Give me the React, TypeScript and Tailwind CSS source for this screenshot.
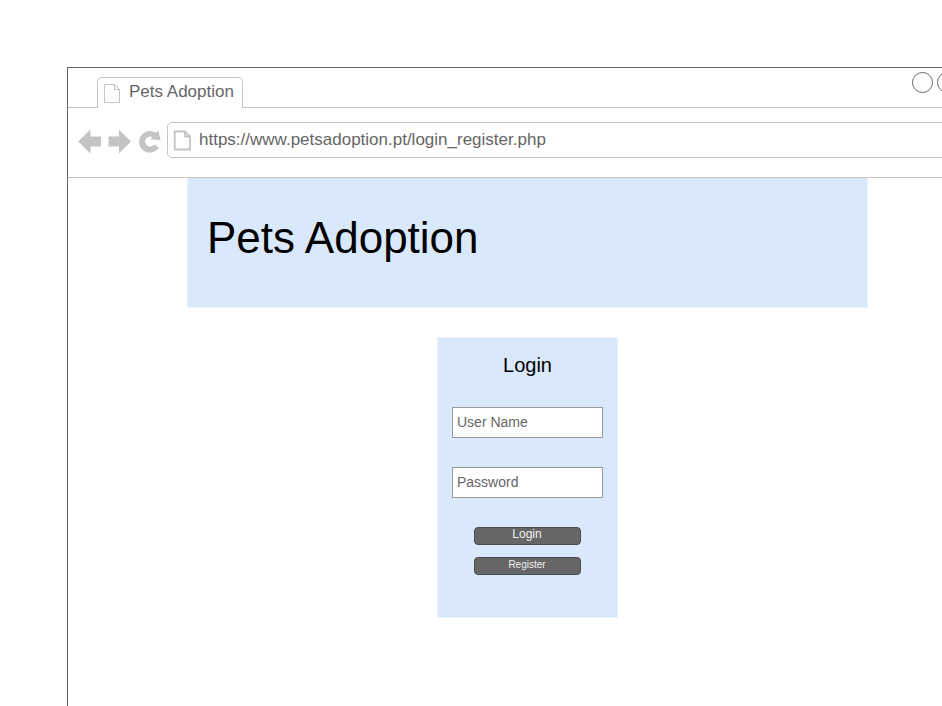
import React from "react";

function PageIcon({ className, strokeWidth, d, fold }: { className: string; strokeWidth: number; d: string; fold: string }) {
  return (
    <svg className={className} viewBox="0 0 20 22" width="20" height="22" fill="none" stroke="#c4c4c4" strokeWidth={strokeWidth}>
      <path d={d} />
      <path d={fold} />
    </svg>
  );
}

function TabStrip() {
  return (
    <div className="flex h-10 w-[900px] shrink-0">
      <div className="w-[29px] border-b border-[#c4c4c4]" />
      <div className="flex h-[31px] w-[146px] self-end rounded-t-[5px] border border-b-0 border-[#c4c4c4]">
        <PageIcon className="ml-1.5 mt-[5px] shrink-0" strokeWidth={1} d="M.5 1.5H10.5L15.5 6.5V19.5H.5Z" fold="M10.5 1.5V6.5H15.5" />
        <span className="ml-[5px] mt-[4px] whitespace-nowrap text-[17px] leading-5 text-[#666]">Pets Adoption</span>
      </div>
      <div className="flex grow gap-[4px] border-b border-[#c4c4c4] pl-[669px] pt-1">
        <div className="size-[21px] shrink-0 rounded-full border border-[#666]" />
        <div className="size-[21px] shrink-0 rounded-full border border-[#666]" />
      </div>
    </div>
  );
}

function AddressBar() {
  return (
    <div className="flex h-[70px] w-[900px] shrink-0 border-b border-[#c4c4c4] pt-3.5">
      <svg className="mt-1.5 shrink-0" width="99" height="28" viewBox="0 0 99 28" fill="#c4c4c4">
        <path d="M10 13.5 22.5 1.5V8.5H33V18.5H22.5V25.5Z" />
        <path d="M63 13.5 51 1.5V8.5H40.5V18.5H51V25.5Z" />
        <path d="M87.8 4.8A10.8 10.8 0 1 0 91 19.6L86.2 16.4A5 5 0 1 1 84.6 9.2L82 11.2 92.6 12.2 90.4 2.4Z" />
      </svg>
      <div className="flex h-9 w-[880px] shrink-0 rounded-[5px] border border-[#c4c4c4]">
        <PageIcon className="ml-[5px] mt-1.5 shrink-0" strokeWidth={1.8} d="M1.7 2.5H12L17 7.5V20.5H1.7Z" fold="M12 2.5V7.5H17" />
        <span className="ml-1.5 mt-[7px] whitespace-nowrap text-[17px] leading-5 text-[#666]">
          https://www.petsadoption.pt/login_register.php
        </span>
      </div>
    </div>
  );
}

function Field({ label }: { label: string }) {
  return (
    <div className="h-[31px] w-[151px] border border-[#999] bg-white pl-1 pt-1.5 text-sm leading-4 text-[#666]">{label}</div>
  );
}

function LoginCard() {
  return (
    <div className="mt-[29px] flex h-[281px] w-[181px] flex-col items-center border border-[#ecf3fd] bg-[#dae8fc]">
      <h2 className="mt-[15px] h-[54px] text-xl leading-6 text-black">Login</h2>
      <Field label="User Name" />
      <div className="h-[29px]" />
      <Field label="Password" />
      <button className="mt-[29px] h-[18px] w-[107px] rounded-[4px] border border-[#4d4d4d] bg-[#666] pb-[4px] pr-px text-xs leading-3 text-[#f0f0f0]">
        Login
      </button>
      <button className="mt-3 h-[18px] w-[107px] rounded-[4px] border border-[#4d4d4d] bg-[#666] pb-[2px] pr-px text-[10px] leading-3 text-[#f0f0f0]">
        Register
      </button>
    </div>
  );
}

export default function App() {
  return (
    <div className="h-[706px] w-[942px] overflow-hidden bg-white pl-[67px] pt-[67px] font-['Liberation_Sans',Arial,sans-serif]">
      <div className="flex h-[700px] w-[900px] flex-col border-l border-t border-[#666]">
        <TabStrip />
        <AddressBar />
        <div className="ml-[119px] flex w-[681px] flex-col items-center">
          <header className="h-[130px] w-full border border-t-0 border-[#ecf3fd] bg-[#dae8fc] pl-[19px] pt-[34px]">
            <h1 className="whitespace-nowrap text-[44px] leading-[52px] text-black">Pets Adoption</h1>
          </header>
          <LoginCard />
        </div>
      </div>
    </div>
  );
}
